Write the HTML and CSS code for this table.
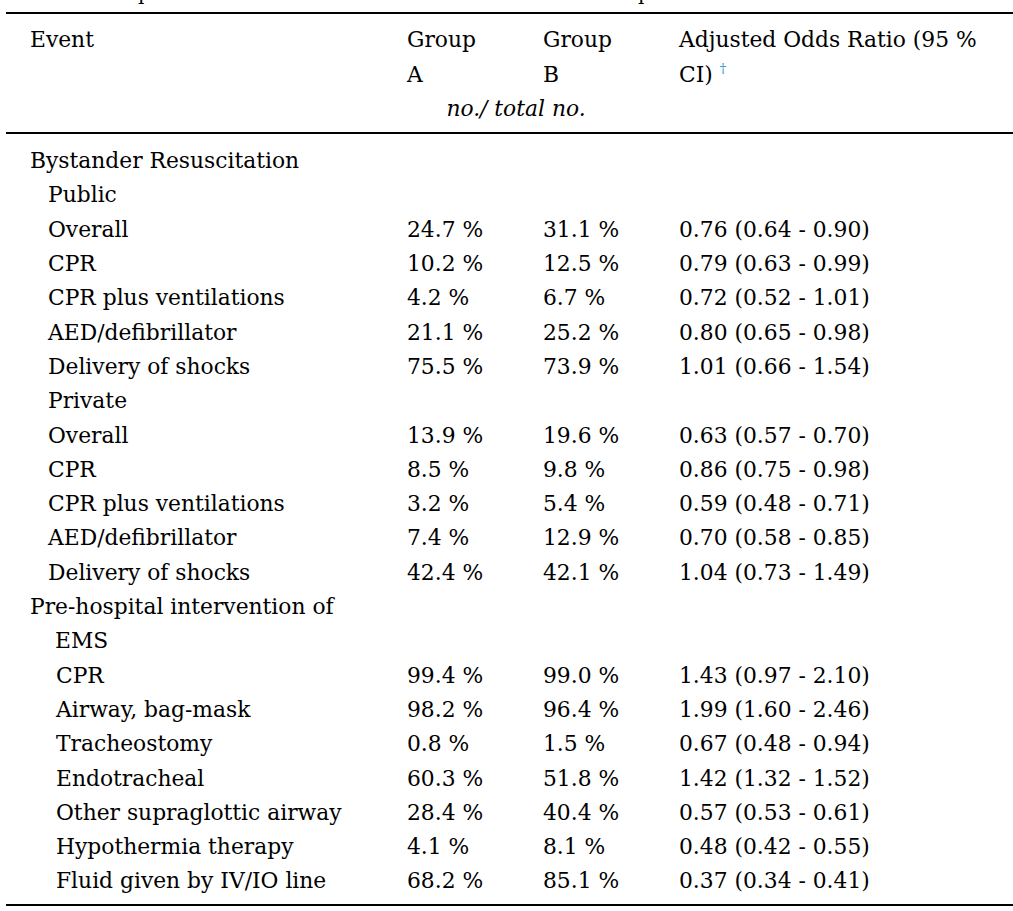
FILE: index.html
```html
<!DOCTYPE html>
<html lang="en">
<head>
    <meta charset="UTF-8">
    <title>Bystander and EMS interventions</title>
    <link rel="stylesheet" href="styles.css">
</head>
<body>
    <div class="caption">Table 3 Comparison of resuscitation interventions in the two patient cohorts.</div>
    <table class="events">
        <colgroup>
            <col class="c-event">
            <col class="c-num">
            <col class="c-num">
            <col>
        </colgroup>
        <thead>
            <tr>
                <th>Event</th>
                <th>Group<br>A</th>
                <th>Group<br>B</th>
                <th>Adjusted Odds Ratio (95 %<br>CI) <sup class="ref">†</sup></th>
            </tr>
            <tr class="units">
                <th></th>
                <th colspan="2"><i>no./ total no.</i></th>
                <th></th>
            </tr>
        </thead>
        <tbody>
            <tr class="first"><td>Bystander Resuscitation</td><td></td><td></td><td></td></tr>
            <tr><td class="sub">Public</td><td></td><td></td><td></td></tr>
            <tr><td class="sub">Overall</td><td>24.7 %</td><td>31.1 %</td><td>0.76 (0.64 - 0.90)</td></tr>
            <tr><td class="sub">CPR</td><td>10.2 %</td><td>12.5 %</td><td>0.79 (0.63 - 0.99)</td></tr>
            <tr><td class="sub">CPR plus ventilations</td><td>4.2 %</td><td>6.7 %</td><td>0.72 (0.52 - 1.01)</td></tr>
            <tr><td class="sub">AED/defibrillator</td><td>21.1 %</td><td>25.2 %</td><td>0.80 (0.65 - 0.98)</td></tr>
            <tr><td class="sub">Delivery of shocks</td><td>75.5 %</td><td>73.9 %</td><td>1.01 (0.66 - 1.54)</td></tr>
            <tr><td class="sub">Private</td><td></td><td></td><td></td></tr>
            <tr><td class="sub">Overall</td><td>13.9 %</td><td>19.6 %</td><td>0.63 (0.57 - 0.70)</td></tr>
            <tr><td class="sub">CPR</td><td>8.5 %</td><td>9.8 %</td><td>0.86 (0.75 - 0.98)</td></tr>
            <tr><td class="sub">CPR plus ventilations</td><td>3.2 %</td><td>5.4 %</td><td>0.59 (0.48 - 0.71)</td></tr>
            <tr><td class="sub">AED/defibrillator</td><td>7.4 %</td><td>12.9 %</td><td>0.70 (0.58 - 0.85)</td></tr>
            <tr><td class="sub">Delivery of shocks</td><td>42.4 %</td><td>42.1 %</td><td>1.04 (0.73 - 1.49)</td></tr>
            <tr><td class="hang">Pre-hospital intervention of<br>EMS</td><td></td><td></td><td></td></tr>
            <tr><td class="sub2">CPR</td><td>99.4 %</td><td>99.0 %</td><td>1.43 (0.97 - 2.10)</td></tr>
            <tr><td class="sub2">Airway, bag-mask</td><td>98.2 %</td><td>96.4 %</td><td>1.99 (1.60 - 2.46)</td></tr>
            <tr><td class="sub2">Tracheostomy</td><td>0.8 %</td><td>1.5 %</td><td>0.67 (0.48 - 0.94)</td></tr>
            <tr><td class="sub2">Endotracheal</td><td>60.3 %</td><td>51.8 %</td><td>1.42 (1.32 - 1.52)</td></tr>
            <tr><td class="sub2">Other supraglottic airway</td><td>28.4 %</td><td>40.4 %</td><td>0.57 (0.53 - 0.61)</td></tr>
            <tr><td class="sub2">Hypothermia therapy</td><td>4.1 %</td><td>8.1 %</td><td>0.48 (0.42 - 0.55)</td></tr>
            <tr class="last"><td class="sub2">Fluid given by IV/IO line</td><td>68.2 %</td><td>85.1 %</td><td>0.37 (0.34 - 0.41)</td></tr>
        </tbody>
    </table>
</body>
</html>
```

FILE: styles.css
```css
body {
    margin: 0;
    background: #fff;
    color: #000;
    font-family: "DejaVu Serif", "Liberation Serif", serif;
    font-size: 21.8px;
    line-height: 34.3px;
    overflow: hidden;
}
.caption {
    margin: -24px 0 0 10px;
    font-size: 20px;
    word-spacing: 0.7px;
    white-space: nowrap;
}
.events {
    margin: 2px 0 0 6px;
    width: 1007px;
    border-collapse: collapse;
    table-layout: fixed;
}
.c-event { width: 393px; }
.c-num { width: 136px; }
.events th, .events td {
    font-weight: normal;
    text-align: left;
    vertical-align: top;
    padding: 0 0 0 8px;
}
.events th:first-child, .events td:first-child { padding-left: 24px; }
.events thead tr:first-child th {
    border-top: 2px solid #000;
    padding-top: 9px;
}
.events .units th {
    border-bottom: 2px solid #000;
    padding-bottom: 6px;
}
.events .units th[colspan] {
    text-align: center;
    padding: 0 38px 6px 0;
}
.events .first td { padding-top: 10px; }
.events .last td {
    border-bottom: 2px solid #000;
    padding-bottom: 5px;
}
.events td.sub { padding-left: 42px; }
.events td.sub2 { padding-left: 50px; }
.events td.hang {
    padding-left: 49px;
    text-indent: -25px;
}
.ref {
    color: #2f97d6;
    font-size: 13px;
    line-height: 0;
    vertical-align: 9px;
}
```
